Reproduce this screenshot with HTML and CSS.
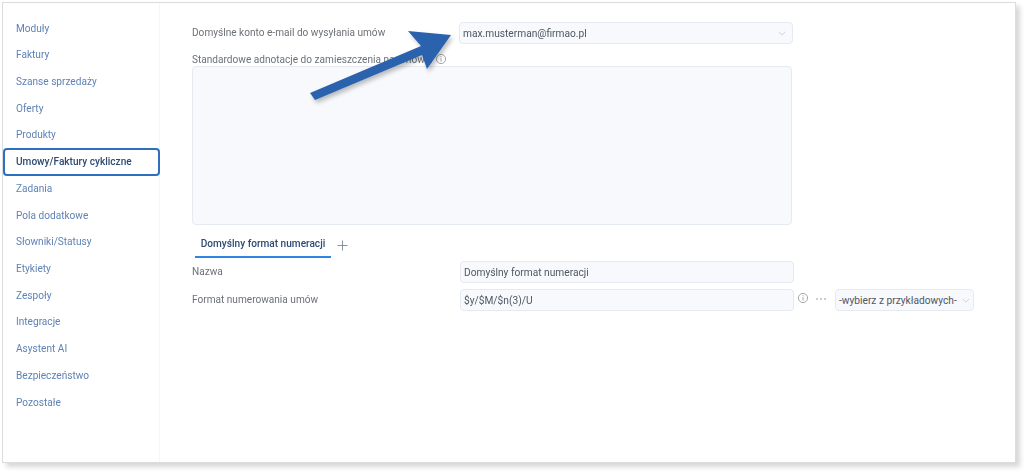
FILE: index.html
```html
<!DOCTYPE html>
<html lang="pl">
<head>
<meta charset="utf-8">
<title>Umowy/Faktury cykliczne</title>
<link rel="stylesheet" href="styles.css">
</head>
<body>
<div class="frame">
  <nav class="side">
    <a class="item">Moduły</a>
    <a class="item">Faktury</a>
    <a class="item">Szanse sprzedaży</a>
    <a class="item">Oferty</a>
    <a class="item">Produkty</a>
    <a class="item active">Umowy/Faktury cykliczne</a>
    <a class="item">Zadania</a>
    <a class="item">Pola dodatkowe</a>
    <a class="item">Słowniki/Statusy</a>
    <a class="item">Etykiety</a>
    <a class="item">Zespoły</a>
    <a class="item">Integracje</a>
    <a class="item">Asystent AI</a>
    <a class="item">Bezpieczeństwo</a>
    <a class="item">Pozostałe</a>
  </nav>
  <main class="main">
    <div class="row-top">
      <span class="label">Domyślne konto e-mail do wysyłania umów</span>
      <div class="field select wide"><span>max.musterman@firmao.pl</span>
        <svg class="chev" viewBox="0 0 10 6"><path d="M1 1l4 4 4-4"/></svg>
      </div>
    </div>
    <div class="note-label">
      <span class="label">Standardowe adnotacje do zamieszczenia na umowie</span>
      <svg class="info" viewBox="0 0 12 12"><circle cx="6" cy="6" r="4.6"/><path d="M6 5.2v3.4M6 3.2v1"/></svg>
    </div>
    <div class="textarea"></div>
    <div class="tabs">
      <div class="tab">Domyślny format numeracji</div>
      <svg class="plus" viewBox="0 0 12 12"><path d="M6 .5v11M.5 6h11"/></svg>
    </div>
    <div class="row">
      <span class="label">Nazwa</span>
      <div class="field wide2">Domyślny format numeracji</div>
    </div>
    <div class="row">
      <span class="label">Format numerowania umów</span>
      <div class="field wide2">$y/$M/$n(3)/U</div>
      <svg class="info gap" viewBox="0 0 12 12"><circle cx="6" cy="6" r="4.6"/><path d="M6 5.2v3.4M6 3.2v1"/></svg>
      <svg class="dots" viewBox="0 0 12 4"><circle cx="2" cy="2" r=".8"/><circle cx="6" cy="2" r=".8"/><circle cx="10" cy="2" r=".8"/></svg>
      <div class="field select small"><span>-wybierz z przykładowych-</span>
        <svg class="chev" viewBox="0 0 10 6"><path d="M1 1l4 4 4-4"/></svg>
      </div>
    </div>
  </main>
  <svg class="arrow" viewBox="0 0 160 90" aria-hidden="true">
    <polygon points="0,64 111,17 98,2 141,6 117,40 112,26 5,71"/>
  </svg>
</div>
</body>
</html>
```
FILE: styles.css
```css
* { box-sizing: border-box; }
html, body { margin: 0; height: 100%; background: #fff; overflow: hidden; }
body { font-family: Roboto, "Liberation Sans", sans-serif; font-size: 10.1px; color: #6a7078; }
.frame {
  position: relative;
  display: flex;
  width: 1014px;
  height: 461px;
  margin: 2px 0 0 2px;
  background: #fff;
  border: 1px solid #dcdcdc;
  box-shadow: 4px 4px 5px rgba(0, 0, 0, .16);
  filter: blur(.3px);
}
.side {
  width: 157px;
  flex: none;
  padding-top: 11.8px;
  border-right: 1px solid #f6f6f7;
}
.item {
  display: flex;
  align-items: center;
  height: 26.71px;
  padding-left: 13px;
  color: #5f82b5;
}
.item.active {
  margin-right: -1px;
  border: 2px solid #2f6fc0;
  border-radius: 4px;
  padding-left: 11px;
  height: 28px;
  margin-top: -.6px;
  margin-bottom: -.7px;
  color: #2d4a75;
  font-weight: 500;
}
.main { flex: 1; padding: 19px 0 0 32px; }
.label { color: #6c7178; }
.row-top { display: flex; align-items: center; }
.row-top .label { width: 267px; flex: none; margin-top: -2px; }
.field {
  display: flex;
  align-items: center;
  height: 22px;
  padding: 0 3px;
  background: #f7f9fc;
  border: 1px solid #e4e9f2;
  border-radius: 4px;
  color: #4f5763;
  font-size: 10.2px;
}
.select { justify-content: space-between; padding-right: 6px; }
.wide { width: 334px; }
.wide2 { width: 334px; flex: none; }
.small { width: 139px; flex: none; padding: 0 3px; }
.chev { width: 8px; height: 5px; fill: none; stroke: #c4cad3; stroke-width: 1; }
.note-label { display: flex; align-items: flex-end; height: 22px; padding-bottom: 1px; }
.info { width: 12px; height: 12px; margin-left: 2px; fill: none; stroke: #9a9ea4; stroke-width: .9; }
.textarea {
  width: 600px;
  height: 159px;
  background: #f7f9fc;
  border: 1px solid #e4e9f2;
  border-radius: 4px;
}
.tabs { display: flex; align-items: center; gap: 6px; height: 33px; margin-left: 3px; }
.tab {
  width: 136px;
  height: 33px;
  padding-top: 13px;
  text-align: center;
  white-space: nowrap;
  color: #2d4a75;
  font-weight: 500;
  border-bottom: 2px solid #2f86e0;
}
.plus { width: 11px; height: 11px; margin-top: 7px; fill: none; stroke: #6c8096; stroke-width: .9; }
.row { display: flex; align-items: center; height: 22px; margin-top: 6px; }
.tabs + .row { margin-top: 3px; }
.row .label { width: 268px; flex: none; margin-top: -2px; }
.gap { margin: -4px 0 0 3px; }
.dots { width: 12px; height: 4px; margin: -2px 8px 0 6px; fill: #8a8f96; }
.arrow {
  position: absolute;
  left: 307px;
  top: 26px;
  width: 160px;
  height: 90px;
  fill: #2a62ae;
  filter: drop-shadow(2px 3px 2px rgba(0, 0, 0, .25));
}
```
